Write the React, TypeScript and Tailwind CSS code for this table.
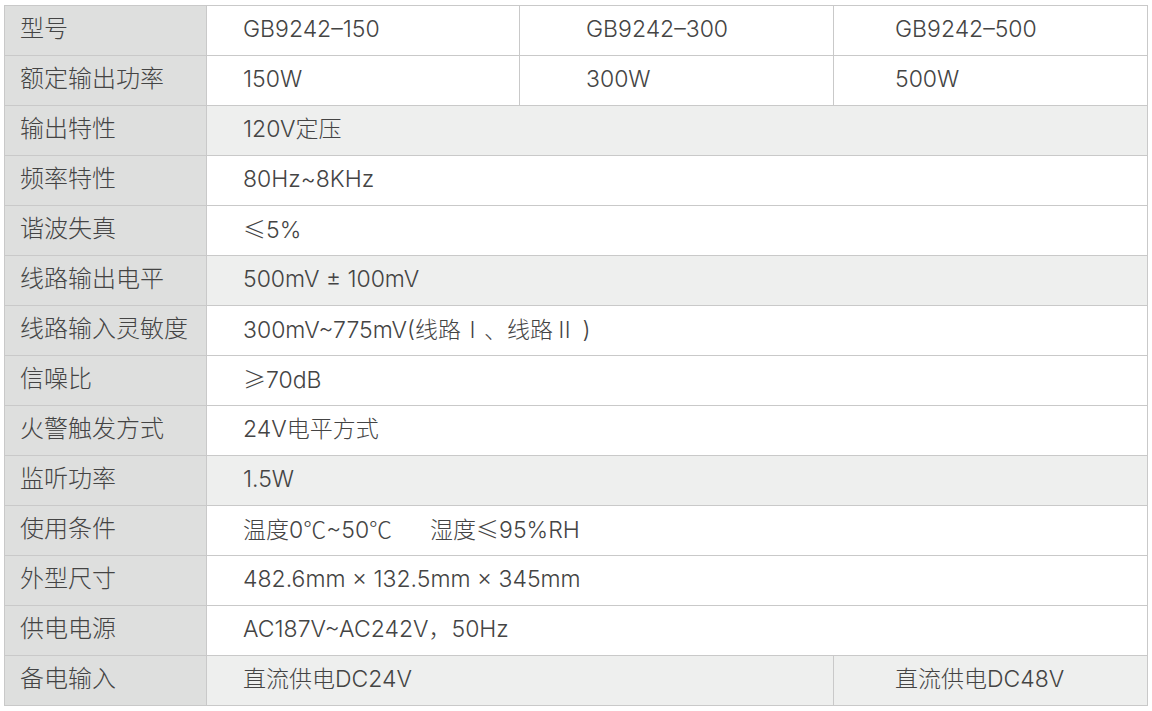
const font = "font-['Inter','Noto_Sans_CJK_SC',sans-serif]";
const cjk = "font-['Noto_Sans_CJK_SC',sans-serif]";

type Row = {
  label: string;
  values: string[] | React.ReactNode;
  shaded?: boolean;
};

function C({ children }: { children: React.ReactNode }) {
  return <span className={cjk}>{children}</span>;
}

const rows: Row[] = [
  { label: "型号", values: ["GB9242–150", "GB9242–300", "GB9242–500"] },
  { label: "额定输出功率", values: ["150W", "300W", "500W"] },
  { label: "输出特性", values: "120V定压", shaded: true },
  { label: "频率特性", values: "80Hz~8KHz" },
  {
    label: "谐波失真",
    values: (
      <>
        <C>≤</C>5%
      </>
    ),
  },
  { label: "线路输出电平", values: "500mV ± 100mV", shaded: true },
  {
    label: "线路输入灵敏度",
    values: (
      <>
        300mV~775mV(线路<C>Ⅰ</C>、线路<C>Ⅱ</C> )
      </>
    ),
  },
  {
    label: "信噪比",
    values: (
      <>
        <C>≥</C>70dB
      </>
    ),
  },
  { label: "火警触发方式", values: "24V电平方式" },
  { label: "监听功率", values: "1.5W", shaded: true },
  {
    label: "使用条件",
    values: (
      <>
        温度0<C>℃</C>~50<C>℃</C>
        <span className="ml-[38px]">
          湿度<C>≤</C>95%RH
        </span>
      </>
    ),
  },
  { label: "外型尺寸", values: "482.6mm × 132.5mm × 345mm" },
  { label: "供电电源", values: "AC187V~AC242V，50Hz" },
];

const colPad = ["pl-[36px]", "pl-[66px]", "pl-[61px]"];

function SpecRow({ row }: { row: Row }) {
  const bg = row.shaded ? "bg-[#eeefee]" : "bg-white";
  return (
    <tr className="h-[50px]">
      <td className="border border-[#c9c9c9] bg-[#dedfde] pl-[15px] pb-[3px] text-[24px]">
        {row.label}
      </td>
      {Array.isArray(row.values) ? (
        row.values.map((v, i) => (
          <td
            key={v}
            className={`border border-[#c9c9c9] ${bg} ${colPad[i]} pb-[3px]`}
          >
            {v}
          </td>
        ))
      ) : (
        <td
          colSpan={3}
          className={`border border-[#c9c9c9] ${bg} pl-[36px] pb-[3px]`}
        >
          {row.values}
        </td>
      )}
    </tr>
  );
}

export default function App() {
  return (
    <div className="h-[711px] w-[1152px] bg-white pl-[4px] pt-[5px]">
      <table
        className={`w-[1143px] table-fixed border-collapse text-[23px] font-light leading-none text-[#444] ${font}`}
      >
        <colgroup>
          <col className="w-[202px]" />
          <col className="w-[313px]" />
          <col className="w-[314px]" />
          <col className="w-[314px]" />
        </colgroup>
        <tbody>
          {rows.map((row) => (
            <SpecRow key={row.label} row={row} />
          ))}
          <tr className="h-[50px]">
            <td className="border border-[#c9c9c9] bg-[#dedfde] pl-[15px] pb-[3px] text-[24px]">
              备电输入
            </td>
            <td
              colSpan={2}
              className="border border-[#c9c9c9] bg-[#eeefee] pl-[36px] pb-[3px]"
            >
              直流供电DC24V
            </td>
            <td className="border border-[#c9c9c9] bg-[#eeefee] pl-[61px] pb-[3px]">
              直流供电DC48V
            </td>
          </tr>
        </tbody>
      </table>
    </div>
  );
}
